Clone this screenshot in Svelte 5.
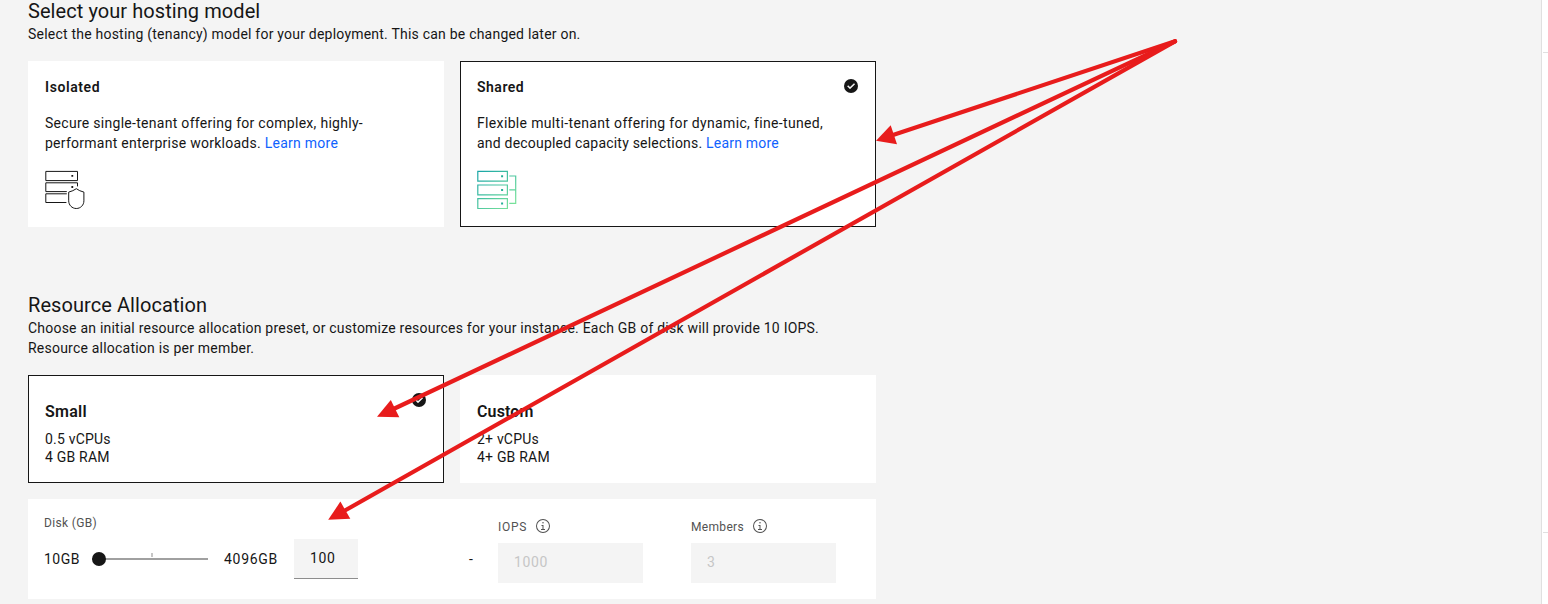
<script>
  const hosting = [
    {
      id: 'isolated', title: 'Isolated', titleGap: 0.6, selected: false,
      lines: [
        { text: 'Secure single-tenant offering for complex, highly-', gap: 0.287 },
        { text: 'performant enterprise workloads. ', link: true, gap: 0.26 }
      ]
    },
    {
      id: 'shared', title: 'Shared', titleGap: 0.5, selected: true,
      lines: [
        { text: 'Flexible multi-tenant offering for dynamic, fine-tuned,', gap: 0.345 },
        { text: 'and decoupled capacity selections. ', link: true, gap: 0.205 }
      ]
    }
  ];

  const presets = [
    { title: 'Small', titleGap: 0.286, cpu: '0.5 vCPUs', ram: '4 GB RAM', selected: true },
    { title: 'Custom', titleGap: 0.125, cpu: '2+ vCPUs', ram: '4+ GB RAM', selected: false }
  ];
</script>

{#snippet check()}
  <svg class="check" viewBox="0 0 16 16" aria-hidden="true">
    <circle cx="8" cy="8" r="7" fill="#161616" />
    <path d="M7 11 4.3 8.3l.9-.8L7 9.3l4-3.9.9.8L7 11z" fill="#fff" stroke="#fff" stroke-width=".3" />
  </svg>
{/snippet}

{#snippet info()}
  <svg class="info" viewBox="0 0 32 32" aria-hidden="true">
    <path fill="#525252" d="M17 22V14H13v2h2v6H12v2h8V22zM16 8a1.5 1.5 0 1 0 1.5 1.5A1.5 1.5 0 0 0 16 8z" />
    <path fill="#525252" d="M16 30A14 14 0 1 1 30 16 14 14 0 0 1 16 30zM16 4A12 12 0 1 0 28 16 12 12 0 0 0 16 4z" />
  </svg>
{/snippet}

<div class="page">
  <main>
    <section>
      <h2>Select your hosting model</h2>
      <p class="sub">Select the hosting (tenancy) model for your deployment. This can be changed later on.</p>
      <div class="cards">
        {#each hosting as item}
          <article class="card host" class:selected={item.selected}>
            <h3 style="letter-spacing: {item.titleGap}px">{item.title}</h3>
            <div class="copy">
              {#each item.lines as line}
                <div style="letter-spacing: {line.gap}px">{line.text}{#if line.link}<span class="link">Learn more</span>{/if}</div>
              {/each}
            </div>
            {#if item.id === 'isolated'}
              <svg class="picto" viewBox="0 0 40 40" fill="none" stroke="#161616" stroke-width="1" aria-hidden="true">
                <path d="M.8 1.4h31.7v9.2H.8z" />
                <path d="M32.5 16.4v-3.6H.8v8.8h21" />
                <path d="M21.8 23.8H.8v8.7h20.6" />
                <path d="M31.3 18.7c-2.1 1.5-4.6 2.7-7.6 3.4v8.7c0 4.3 3.3 7.7 7.6 7.7s7.6-3.4 7.6-7.7v-8.7c-3-.7-5.5-1.9-7.6-3.4z" />
                <path d="M26.4 4.9h1.8v1.8h-1.8zM26.4 16.1h1.8v1.8h-1.8z" fill="#161616" stroke="none" />
              </svg>
            {:else}
              <svg class="picto" viewBox="0 0 40 40" fill="none" stroke="url(#tone)" stroke-width="1.2" aria-hidden="true">
                <defs>
                  <linearGradient id="tone" gradientUnits="userSpaceOnUse" x1="2" y1="2" x2="34" y2="38">
                    <stop offset="0" stop-color="#1aa6a6" />
                    <stop offset="1" stop-color="#7ae39a" />
                  </linearGradient>
                </defs>
                <path d="M.8 1.3h29.6v9.8H.8zM.8 15h29.6v9.8H.8zM.8 28.7h29.6v9.8H.8z" />
                <path d="M32.3 6h6.4v27.3h-6.4M32.3 19.8h6.4" />
                <path d="M24.1 5.2h2v2h-2zM24.1 18.9h2v2h-2zM24.1 32.6h2v2h-2z" fill="#24b096" stroke="none" />
              </svg>
            {/if}
            {#if item.selected}{@render check()}{/if}
          </article>
        {/each}
      </div>
    </section>

    <section class="allocation">
      <h2>Resource Allocation</h2>
      <p class="sub">Choose an initial resource allocation preset, or customize resources for your instance. Each GB of disk will provide 10 IOPS.<br />Resource allocation is per member.</p>
      <div class="cards">
        {#each presets as item}
          <article class="card preset" class:selected={item.selected}>
            <h4 style="letter-spacing: {item.titleGap}px">{item.title}</h4>
            <div>{item.cpu}</div>
            <div>{item.ram}</div>
            {#if item.selected}{@render check()}{/if}
          </article>
        {/each}
      </div>

      <div class="panel">
        <div class="disk">
          <div class="label">Disk (GB)</div>
          <div class="slider">
            <span class="min">10GB</span>
            <span class="track"><i class="tick"></i><i class="thumb"></i></span>
            <span class="max">4096GB</span>
            <span class="amount">100</span>
          </div>
        </div>
        <div class="dash">-</div>
        <div class="field">
          <div class="label"><span class="iops">IOPS</span>{@render info()}</div>
          <div class="value">1000</div>
        </div>
        <div class="field">
          <div class="label"><span>Members</span>{@render info()}</div>
          <div class="value">3</div>
        </div>
      </div>
    </section>
  </main>

  <aside><hr /><hr /></aside>

  <svg class="arrows" viewBox="0 0 1548 604" aria-hidden="true">
    <g stroke="#e81c1c" stroke-width="4.2" stroke-linecap="round">
      <path d="M1175 41.3 893 135" />
      <path d="M1175 41.3 393.5 409" />
      <path d="M1175 41.3 344 511" />
    </g>
    <g fill="#e81c1c">
      <path d="M876 140.7 890.7 125.3 897 144.2z" />
      <path d="M377 416.8 390.8 400 399.3 417.2z" />
      <path d="M328.2 519.8 340.4 501.6 350.3 518.8z" />
    </g>
  </svg>
</div>

<style>
  :global(body) { margin: 0; }

  .page {
    position: relative;
    display: flex;
    justify-content: space-between;
    height: 604px;
    overflow: hidden;
    background: #f4f4f4;
    color: #161616;
    font: 14px/20px Roboto, sans-serif;
  }
  main { width: 848px; margin-left: 28px; }
  h2, h3, h4, p { margin: 0; }
  h2 { font-size: 20px; font-weight: 400; line-height: 22px; letter-spacing: 0.07px; white-space: nowrap; }
  .sub { margin-top: 2px; letter-spacing: 0.218px; white-space: nowrap; }
  .cards { display: grid; grid-template-columns: 416px 416px; gap: 16px; margin-top: 17px; }
  .card {
    position: relative;
    box-sizing: border-box;
    padding: 15px 16px;
    border: 1px solid #fff;
    background: #fff;
    white-space: nowrap;
  }
  .card.selected { border-color: #161616; }
  .host { height: 166px; }
  h3 { font-size: 14px; font-weight: 600; line-height: 20px; }
  .copy { margin-top: 16px; }
  .link { color: #0f62fe; }
  .picto { display: block; width: 40px; height: 40px; margin-top: 17px; }
  .check { position: absolute; top: 16px; right: 16px; width: 16px; height: 16px; }

  .allocation { margin-top: 67px; }
  .preset { height: 108px; padding-top: 25px; line-height: 18px; letter-spacing: 0.2px; }
  h4 { margin-bottom: 7px; font-size: 16px; font-weight: 600; line-height: 22px; }

  .panel {
    display: flex;
    box-sizing: border-box;
    height: 100px;
    margin-top: 16px;
    padding: 16px 40px 16px 16px;
    background: #fff;
  }
  .disk { width: 424px; }
  .label { font-size: 12px; line-height: 16px; letter-spacing: 0.33px; color: #525252; }
  .slider { display: flex; align-items: center; height: 40px; margin-top: 8px; }
  .min { width: 48px; letter-spacing: 0.5px; }
  .track { position: relative; width: 116px; height: 2px; background: #a0a0a0; }
  .max { width: 86px; padding-left: 16px; box-sizing: border-box; letter-spacing: 0.7px; }
  .tick { position: absolute; left: 59px; top: -5px; width: 2px; height: 4px; background: #c6c6c6; }
  .thumb { position: absolute; left: 0; top: -6px; width: 14px; height: 14px; border-radius: 50%; background: #161616; }
  .amount {
    box-sizing: border-box;
    width: 64px;
    height: 40px;
    padding-left: 16px;
    border-bottom: 1px solid #8d8d8d;
    background: #f4f4f4;
    line-height: 39px;
    letter-spacing: 0.63px;
  }
  .dash { box-sizing: border-box; width: 30px; padding: 34px 0 0 1px; }
  .field { width: 145px; }
  .field + .field { margin-left: 48px; }
  .field .label { display: flex; align-items: center; gap: 8px; height: 16px; margin-top: 3px; }
  .field .label span { padding-top: 2px; }
  .field .label .iops { letter-spacing: 0.696px; }
  .info { width: 16px; height: 16px; }
  .value {
    height: 40px;
    margin-top: 9px;
    padding-left: 16px;
    background: #f4f4f4;
    color: #c6c6c6;
    line-height: 39px;
    letter-spacing: 0.63px;
  }

  aside { width: 6px; border-left: 1px solid #e0e0e0; background: #fff; }
  hr { height: 1px; margin: 52px 0 0 1px; border: 0; background: #e0e0e0; }
  hr + hr { margin-top: 479px; }

  .arrows { position: absolute; inset: 0; width: 1548px; height: 604px; pointer-events: none; }
</style>
